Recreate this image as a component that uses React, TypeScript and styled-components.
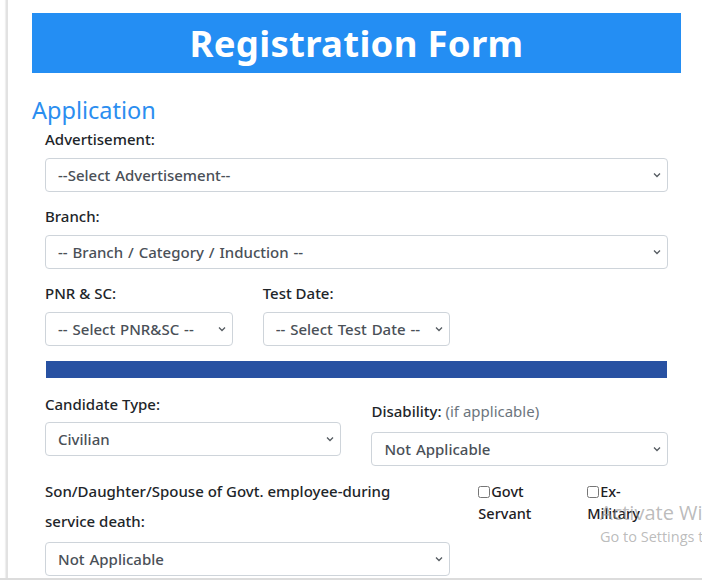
import React from "react";
import styled, { createGlobalStyle } from "styled-components";

const GlobalStyle = createGlobalStyle`
  html, body {
    margin: 0;
    padding: 0;
    background: #ffffff;
  }
  body {
    font-family: "Noto Sans", "DejaVu Sans", sans-serif;
    color: #212529;
    overflow: hidden;
  }
`;

const Screen = styled.div`
  position: relative;
  width: 702px;
  height: 578px;
  border-bottom: 2px solid #dcdcdc;
  overflow: hidden;
`;

const Frame = styled.div`
  margin-left: 6px;
  height: 100%;
  border-left: 2px solid #e2e2e2;
  box-shadow: -1px 0 1px #efefef;
  padding-left: 24px;
  padding-top: 13px;
  box-sizing: border-box;
`;

const Banner = styled.div`
  width: 649px;
  height: 60px;
  background: #248ef3;
  display: flex;
  align-items: center;
  justify-content: center;
`;

const BannerTitle = styled.h1`
  margin: 0;
  color: #ffffff;
  font-family: "Noto Sans", sans-serif;
  font-weight: 700;
  font-size: 36.5px;
  line-height: 1;
  letter-spacing: 0.3px;
`;

const SectionTitle = styled.h2`
  margin: 22px 0 3px 0;
  height: 30px;
  line-height: 30px;
  font-size: 23.5px;
  font-weight: 400;
  color: #2b8ef0;
`;

const Form = styled.form`
  width: 623px;
  margin-left: 13px;
  display: grid;
  grid-template-columns: repeat(12, 1fr);
  column-gap: 30px;
`;

const Field = styled.div<{ $span: number; $mb?: number; $pt?: number }>`
  grid-column: span ${(p) => p.$span};
  margin-bottom: ${(p) => p.$mb ?? 0}px;
  padding-top: ${(p) => p.$pt ?? 0}px;
  min-width: 0;
`;

const Label = styled.label<{ $mb?: number; $lh?: number; $mt?: number }>`
  display: block;
  font-size: 15px;
  font-weight: 500;
  line-height: ${(p) => p.$lh ?? 22}px;
  margin-top: ${(p) => p.$mt ?? 0}px;
  margin-bottom: ${(p) => p.$mb ?? 8}px;
  color: #212529;
  max-width: 390px;
`;

const Hint = styled.span`
  color: #6c757d;
  font-weight: 400;
`;

const SelectWrap = styled.div`
  position: relative;
  height: 34px;
`;

const Select = styled.select`
  appearance: none;
  -webkit-appearance: none;
  width: 100%;
  height: 34px;
  box-sizing: border-box;
  border: 1px solid #ced4da;
  border-radius: 4px;
  background: #ffffff;
  padding: 0 24px 0 12px;
  font-family: "Noto Sans", sans-serif;
  font-size: 15px;
  font-weight: 500;
  word-spacing: 1px;
  color: #4a5057;
  outline: none;
`;

const Chevron = styled.svg`
  position: absolute;
  right: 7px;
  top: 50%;
  margin-top: -3px;
  width: 8px;
  height: 6px;
  pointer-events: none;
`;

const Divider = styled.div`
  grid-column: span 12;
  height: 17px;
  margin: 0 1px 15px 1px;
  background: #2851a2;
`;

const RowBreak = styled.div<{ $h: number; $span?: number }>`
  grid-column: span ${(p) => p.$span ?? 12};
  height: ${(p) => p.$h}px;
`;

const CheckLabel = styled.label`
  display: block;
  font-size: 14.5px;
  font-weight: 500;
  line-height: 22px;
  color: #1d2024;
  margin-left: -2px;
`;

const Check = styled.input`
  width: 12px;
  height: 12px;
  margin: 0 1px 0 0;
  vertical-align: -1px;
`;

const Watermark = styled.div`
  position: absolute;
  left: 600px;
  top: 500px;
  font-family: "Open Sans", "Noto Sans", sans-serif;
  color: rgba(150, 150, 150, 0.65);
  white-space: nowrap;
  pointer-events: none;
`;

const WatermarkTitle = styled.div`
  font-size: 20px;
  line-height: 26px;
  font-weight: 400;
`;

const WatermarkSub = styled.div`
  font-size: 14.5px;
  line-height: 20px;
  margin-top: 1px;
`;

const Dropdown = ({ value }: { value: string }) => (
  <SelectWrap>
    <Select defaultValue={value}>
      <option value={value}>{value}</option>
    </Select>
    <Chevron viewBox="0 0 8 6">
      <path d="M1 1.5 L4 4.5 L7 1.5" fill="none" stroke="#555b61" strokeWidth="1.3" />
    </Chevron>
  </SelectWrap>
);

export default function App() {
  return (
    <>
      <GlobalStyle />
      <Screen>
        <Frame>
          <Banner>
            <BannerTitle>Registration Form</BannerTitle>
          </Banner>
          <SectionTitle>Application</SectionTitle>
          <Form onSubmit={(e) => e.preventDefault()}>
            <Field $span={12} $mb={13}>
              <Label>Advertisement:</Label>
              <Dropdown value="--Select Advertisement--" />
            </Field>
            <Field $span={12} $mb={13}>
              <Label>Branch:</Label>
              <Dropdown value="-- Branch / Category / Induction --" />
            </Field>
            <Field $span={4} $mb={15}>
              <Label>PNR &amp; SC:</Label>
              <Dropdown value="-- Select PNR&SC --" />
            </Field>
            <Field $span={4} $mb={15}>
              <Label>Test Date:</Label>
              <Dropdown value="-- Select Test Date --" />
            </Field>
            <RowBreak $h={0} $span={4} />
            <Divider />
            <Field $span={6}>
              <Label $mb={7}>Candidate Type:</Label>
              <Dropdown value="Civilian" />
            </Field>
            <Field $span={6}>
              <Label $mt={7} $mb={10}>
                Disability: <Hint>(if applicable)</Hint>
              </Label>
              <Dropdown value="Not Applicable" />
            </Field>
            <RowBreak $h={10} />
            <Field $span={8}>
              <Label $lh={30} $mb={6}>
                Son/Daughter/Spouse of Govt. employee-during service death:
              </Label>
              <Dropdown value="Not Applicable" />
            </Field>
            <Field $span={2} $pt={4}>
              <CheckLabel>
                <Check type="checkbox" />
                Govt Servant
              </CheckLabel>
            </Field>
            <Field $span={2} $pt={4}>
              <CheckLabel>
                <Check type="checkbox" />
                Ex-Military
              </CheckLabel>
            </Field>
          </Form>
        </Frame>
        <Watermark>
          <WatermarkTitle>Activate Windows</WatermarkTitle>
          <WatermarkSub>Go to Settings to activate Windows.</WatermarkSub>
        </Watermark>
      </Screen>
    </>
  );
}
